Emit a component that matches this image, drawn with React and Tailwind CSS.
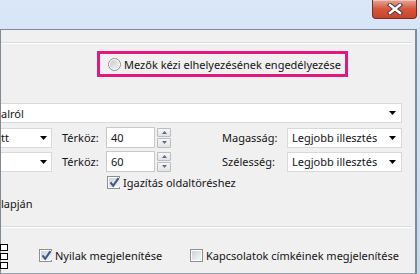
const font = { fontFamily: '"Noto Sans", "Open Sans", sans-serif' };

const Arrow = () => (
  <svg width="7" height="4" viewBox="0 0 7 4" className="shrink-0">
    <path d="M0 0 H7 L3.5 4 Z" fill="#000" />
  </svg>
);

const Combo = ({ text, className, arrowClass = "mr-[5px]", textClass = "pl-[4px]" }) => (
  <div
    className={`h-[20px] bg-white border border-[#d9d9d9] flex items-center justify-between ${className}`}
  >
    <span className={`text-[11px] leading-none whitespace-nowrap text-[#141414] ${textClass}`}>{text}</span>
    <span className={arrowClass}>
      <Arrow />
    </span>
  </div>
);

const Spin = ({ value }) => (
  <div className="flex items-center ml-[8px]">
    <div className="w-[49px] h-[21px] bg-white border border-[#c9c9c9] flex items-center pl-[4px] text-[11px] leading-none text-[#141414]">
      {value}
    </div>
    <div className="ml-[2px] flex flex-col gap-px">
      <div className="w-[14px] h-[9px] border border-[#b9bcc2] rounded-[1px] bg-gradient-to-b from-[#f7f7f7] to-[#e3e3e3] flex items-center justify-center">
        <svg width="5" height="3" viewBox="0 0 5 3">
          <path d="M0 3 H5 L2.5 0 Z" fill="#5b6d91" />
        </svg>
      </div>
      <div className="w-[14px] h-[10px] border border-[#b9bcc2] rounded-[1px] bg-gradient-to-b from-[#f7f7f7] to-[#e3e3e3] flex items-center justify-center">
        <svg width="5" height="3" viewBox="0 0 5 3">
          <path d="M0 0 H5 L2.5 3 Z" fill="#5b6d91" />
        </svg>
      </div>
    </div>
  </div>
);

const Check = ({ checked }) => (
  <span className="w-[13px] h-[13px] border border-[#8e8f8f] bg-white p-px shrink-0 flex">
    <span className="flex-1 bg-gradient-to-br from-[#cfd2d6] to-[#f7f7f7] flex items-center justify-center">
      {checked && (
        <svg width="11" height="11" viewBox="0 0 11 11">
          <path d="M1.5 5.3 L4.2 8.8 L9.5 1.2" fill="none" stroke="#40568f" strokeWidth="2.1" />
        </svg>
      )}
    </span>
  </span>
);

const Radio = () => (
  <span className="w-[13px] h-[13px] rounded-full border border-[#8e8f8f] bg-white p-px flex shrink-0">
    <span className="flex-1 rounded-full bg-gradient-to-br from-[#c6c9cd] to-[#f4f4f4]" />
  </span>
);

const Sep = ({ className }) => (
  <div className={`h-[2px] border-t border-[#d5dce3] border-b border-b-white mr-[4px] ${className}`} />
);

export default function App() {
  return (
    <div
      className="w-[420px] h-[274px] bg-gradient-to-b from-[#d9e7f8] to-[#c1d7f1] flex flex-col overflow-hidden"
      style={font}
    >
      {/* title bar */}
      <div className="h-[29px] flex justify-end shrink-0">
        <div className="w-[45px] h-[19px] mr-[3px] rounded-b-[4px] border border-t-0 border-[#7d2b20] bg-gradient-to-b from-[#e7a595] via-[#d4543c] to-[#c8452c] flex items-center justify-center shadow-[inset_0_1px_0_rgba(255,255,255,0.4)]">
          <svg width="16" height="12" viewBox="0 0 16 12">
            <path d="M3 2 L13 10 M13 2 L3 10" stroke="#3b3b3b" strokeWidth="4.2" strokeLinecap="square" />
            <path d="M3 2 L13 10 M13 2 L3 10" stroke="#ffffff" strokeWidth="2.4" strokeLinecap="square" />
          </svg>
        </div>
      </div>

      {/* dialog body */}
      <div className="flex-1 mr-[3px] bg-[#f0f0f0] border-t border-l border-r-2 border-b border-[#7f8a96] border-b-[#9aa3ad] flex flex-col text-[11px] text-[#141414] whitespace-nowrap">
        <Sep className="mt-[12px]" />

        <div className="mt-[7px] ml-[96px] w-[251px] h-[26px] border-[3px] border-[#e2187e] flex items-center pl-[8px]">
          <Radio />
          <span className="ml-[3px] leading-none">Mezők kézi elhelyezésének engedélyezése</span>
        </div>

        <Combo text="alról" className="mt-[26px] w-[401px] border-l-0" textClass="pl-0" />

        <div className="mt-[4px] flex items-center h-[21px]">
          <Combo text="tt" className="w-[51px] border-l-0" textClass="pl-0" arrowClass="mr-[4px]" />
          <span className="ml-[10px] w-[36px] leading-none">Térköz:</span>
          <Spin value="40" />
          <span className="ml-[51px] w-[65px] leading-none">Magasság:</span>
          <Combo text="Legjobb illesztés" className="w-[115px]" />
        </div>

        <div className="mt-[3px] flex items-center h-[21px]">
          <Combo text="" className="w-[51px] border-l-0" textClass="pl-0" arrowClass="mr-[4px]" />
          <span className="ml-[10px] w-[36px] leading-none">Térköz:</span>
          <Spin value="60" />
          <span className="ml-[51px] w-[65px] leading-none">Szélesség:</span>
          <Combo text="Legjobb illesztés" className="w-[115px]" />
        </div>

        <div className="mt-[4px] ml-[106px] flex items-center h-[13px]">
          <Check checked />
          <span className="ml-[3px] leading-none">Igazítás oldaltöréshez</span>
        </div>

        <div className="mt-[7px] h-[14px] flex items-center leading-none">lapján</div>

        <Sep className="mt-[16px]" />

        <div className="mt-[16px] flex items-start">
          <div className="flex flex-col gap-[2px] -ml-px">
            <span className="w-[8px] h-[7px] border border-black bg-white" />
            <span className="w-[8px] h-[7px] border border-black bg-white" />
            <span className="w-[8px] h-[7px] border border-black bg-white" />
          </div>
          <div className="ml-[31px] mt-[5px] w-[151px] flex items-center">
            <Check checked />
            <span className="ml-[3px] leading-none">Nyilak megjelenítése</span>
          </div>
          <div className="mt-[5px] flex items-center">
            <Check />
            <span className="ml-[3px] leading-none">Kapcsolatok címkéinek megjelenítése</span>
          </div>
        </div>
      </div>
    </div>
  );
}
